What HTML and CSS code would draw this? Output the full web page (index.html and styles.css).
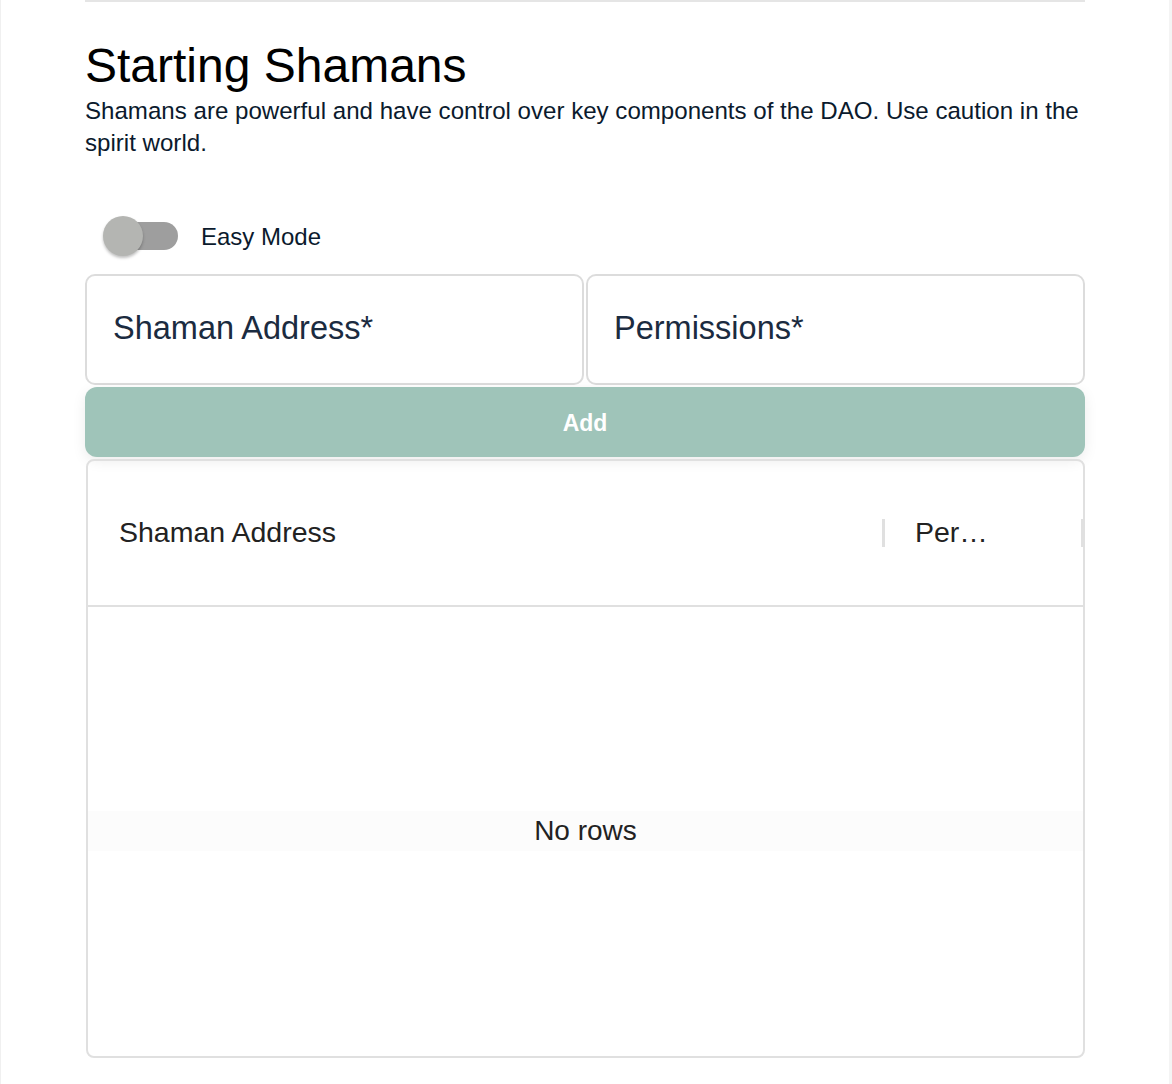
FILE: index.html
```html
<!DOCTYPE html>
<html>
<head>
<meta charset="utf-8">
<link rel="stylesheet" href="styles.css">
</head>
<body>
<div class="page">
  <div class="content">
    <div class="rule"></div>
    <h1 class="title">Starting Shamans</h1>
    <p class="desc">Shamans are powerful and have control over key components of the DAO. Use caution in the spirit world.</p>
    <div class="toggle-row">
      <div class="switch"><div class="track"></div><div class="knob"></div></div>
      <span class="toggle-label">Easy Mode</span>
    </div>
    <div class="inputs">
      <div class="field"><span class="field-label">Shaman Address*</span></div>
      <div class="field"><span class="field-label">Permissions*</span></div>
    </div>
    <button class="add-btn">Add</button>
    <div class="table">
      <div class="thead">
        <div class="th th-addr">Shaman Address</div>
        <div class="sep"></div>
        <div class="th th-perm">Per…</div>
        <div class="sep sep-end"></div>
      </div>
      <div class="tbody">
        <div class="empty">No rows</div>
      </div>
    </div>
  </div>
</div>
</body>
</html>
```
FILE: styles.css
```css
html, body {
  margin: 0;
  padding: 0;
  background: #fff;
}
.page {
  width: 1172px;
  height: 1084px;
  box-sizing: border-box;
  border-left: 1px solid #f0f0f0;
  border-right: 3px solid #f4f4f4;
  font-family: "Liberation Sans", Arial, sans-serif;
  overflow: hidden;
}
.content {
  margin-left: 84px;
  width: 1000px;
  display: flex;
  flex-direction: column;
}
.rule {
  height: 2px;
  background: #e5e5e5;
}
.title {
  margin: 35px 0 0 0;
  font-size: 48px;
  line-height: 58px;
  font-weight: 400;
  color: #000;
}
.desc {
  margin: 0;
  font-size: 24.1px;
  line-height: 32px;
  color: #0b1a2d;
}
.toggle-row {
  display: flex;
  align-items: center;
  height: 44px;
  margin-top: 55px;
  padding-left: 18px;
}
.switch {
  position: relative;
  width: 75px;
  height: 42px;
}
.track {
  position: absolute;
  left: 6px;
  top: 7px;
  width: 69px;
  height: 28px;
  border-radius: 14px;
  background: #9e9e9e;
}
.knob {
  position: absolute;
  left: 0;
  top: 1px;
  width: 40px;
  height: 40px;
  border-radius: 50%;
  background: #b4b5b2;
  box-shadow: 0 2px 3px rgba(0,0,0,0.25);
}
.toggle-label {
  margin-left: 23px;
  font-size: 24px;
  color: #0b1a2d;
  padding-top: 2px;
}
.inputs {
  margin-top: 16px;
  display: flex;
  gap: 2px;
}
.field {
  flex: 1;
  height: 111px;
  box-sizing: border-box;
  border: 2px solid #dcdcdc;
  border-radius: 10px;
  display: flex;
  align-items: center;
  padding-left: 26px;
  padding-bottom: 2px;
}
.field-label {
  font-size: 32.5px;
  color: #1b2b40;
}
.add-btn {
  margin-top: 2px;
  height: 70px;
  width: 1000px;
  border: none;
  border-radius: 12px;
  background: #9fc4b9;
  color: #fff;
  font-family: "Liberation Sans", Arial, sans-serif;
  font-size: 23px;
  font-weight: 700;
  box-shadow: 0 4px 14px rgba(0,0,0,0.08);
  padding: 3px 0 0 0;
}
.table {
  margin-top: 2px;
  height: 599px;
  box-sizing: border-box;
  border: 2px solid #e0e0e0;
  border-radius: 8px;
  display: flex;
  flex-direction: column;
  margin-left: 1px;
  width: 999px;
}
.thead {
  height: 144px;
  border-bottom: 2px solid #e0e0e0;
  display: flex;
  align-items: center;
}
.th {
  font-size: 28.5px;
  color: #222;
  padding-bottom: 2px;
}
.th-addr {
  width: 794px;
  box-sizing: border-box;
  padding-left: 31px;
}
.th-perm {
  flex: 1;
  padding-left: 30px;
}
.sep {
  width: 3px;
  height: 28px;
  background: #e0e0e0;
}
.sep-end {
  width: 2px;
}
.tbody {
  flex: 1;
  display: flex;
  align-items: center;
}
.empty {
  width: 100%;
  height: 40px;
  background: #fcfcfc;
  text-align: center;
  font-size: 28px;
  line-height: 40px;
  color: #222;
  margin-top: -2px;
}
```
